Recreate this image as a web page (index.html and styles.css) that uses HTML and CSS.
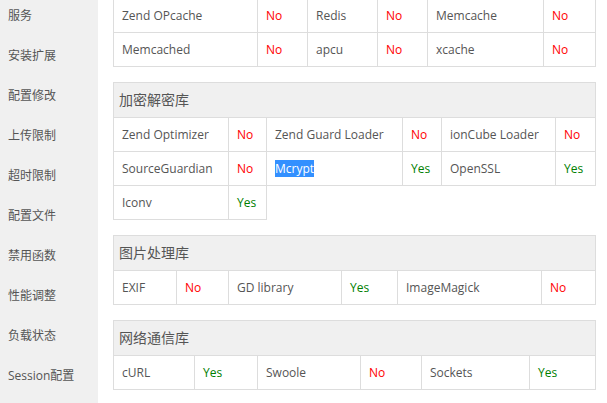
FILE: index.html
```html
<!DOCTYPE html>
<html lang="zh-CN">
<head>
<meta charset="utf-8">
<title>PHP 扩展</title>
<link rel="stylesheet" href="styles.css">
</head>
<body>
<div class="page">
  <aside class="menu">
    <ul class="menu-list">
      <li class="menu-item">服务</li>
      <li class="menu-item">安装扩展</li>
      <li class="menu-item">配置修改</li>
      <li class="menu-item">上传限制</li>
      <li class="menu-item">超时限制</li>
      <li class="menu-item">配置文件</li>
      <li class="menu-item">禁用函数</li>
      <li class="menu-item">性能调整</li>
      <li class="menu-item">负载状态</li>
      <li class="menu-item">Session配置</li>
    </ul>
  </aside>
  <main class="content">
    <table class="lib lib-cache">
      <colgroup><col class="c1"><col class="c2"><col class="c3"><col class="c4"><col class="c5"><col class="c6"></colgroup>
      <tbody>
        <tr><td>Zend OPcache</td><td class="no">No</td><td>Redis</td><td class="no">No</td><td>Memcache</td><td class="no">No</td></tr>
        <tr><td>Memcached</td><td class="no">No</td><td>apcu</td><td class="no">No</td><td>xcache</td><td class="no">No</td></tr>
      </tbody>
    </table>

    <table class="lib lib-crypt">
      <colgroup><col class="c1"><col class="c2"><col class="c3"><col class="c4"><col class="c5"><col class="c6"></colgroup>
      <thead><tr><th colspan="6">加密解密库</th></tr></thead>
      <tbody>
        <tr><td>Zend Optimizer</td><td class="no">No</td><td>Zend Guard Loader</td><td class="no">No</td><td>ionCube Loader</td><td class="no">No</td></tr>
        <tr><td>SourceGuardian</td><td class="no">No</td><td><span class="sel">Mcrypt</span></td><td class="yes">Yes</td><td>OpenSSL</td><td class="yes">Yes</td></tr>
        <tr><td>Iconv</td><td class="yes">Yes</td></tr>
      </tbody>
    </table>

    <table class="lib lib-image">
      <colgroup><col class="c1"><col class="c2"><col class="c3"><col class="c4"><col class="c5"><col class="c6"></colgroup>
      <thead><tr><th colspan="6">图片处理库</th></tr></thead>
      <tbody>
        <tr><td>EXIF</td><td class="no">No</td><td>GD library</td><td class="yes">Yes</td><td>ImageMagick</td><td class="no">No</td></tr>
      </tbody>
    </table>

    <table class="lib lib-net">
      <colgroup><col class="c1"><col class="c2"><col class="c3"><col class="c4"><col class="c5"><col class="c6"></colgroup>
      <thead><tr><th colspan="6">网络通信库</th></tr></thead>
      <tbody>
        <tr><td>cURL</td><td class="yes">Yes</td><td>Swoole</td><td class="no">No</td><td>Sockets</td><td class="yes">Yes</td></tr>
      </tbody>
    </table>
  </main>
</div>
</body>
</html>
```

FILE: styles.css
```css
html, body {
  margin: 0;
  padding: 0;
  background: #fff;
}

body {
  font-family: "Open Sans", "Noto Sans CJK SC", sans-serif;
  font-size: 12px;
  color: #555;
  overflow: hidden;
}

.page {
  display: flex;
  height: 403px;
}

.menu {
  width: 98px;
  flex: 0 0 98px;
  background: #f0f0f0;
  overflow: hidden;
}

.menu-list {
  list-style: none;
  margin: -4px 0 0;
  padding: 0;
}

.menu-item {
  height: 40px;
  line-height: 40px;
  padding-left: 8px;
  font-size: 12px;
  color: #555;
  white-space: nowrap;
}

.content {
  flex: 1;
  padding: 0 11px 0 15px;
  display: flex;
  flex-direction: column;
  gap: 15px;
  overflow: hidden;
}

.lib {
  width: 483px;
  table-layout: fixed;
  border-collapse: separate;
  border-spacing: 0;
  border-top: 1px solid #ddd;
  border-left: 1px solid #ddd;
  font-size: 12px;
  color: #555;
}

.lib-cache {
  margin-top: -2px;
}

.lib td,
.lib th {
  box-sizing: border-box;
  border-right: 1px solid #ddd;
  border-bottom: 1px solid #ddd;
  text-align: left;
  white-space: nowrap;
  overflow: hidden;
}

.lib td {
  padding: 8px 8px;
  line-height: 17px;
}

.lib th {
  padding: 8px 5px;
  line-height: 18px;
  font-size: 14px;
  font-weight: normal;
  background: #f0f0f0;
  color: #555;
}

.no { color: #ff0000; }
.yes { color: #008000; }

.sel {
  background: #3390ff;
  color: #fff;
}

.lib-cache .c1 { width: 144px; }
.lib-cache .c2 { width: 50px; }
.lib-cache .c3 { width: 70px; }
.lib-cache .c4 { width: 50px; }
.lib-cache .c5 { width: 116px; }
.lib-cache .c6 { width: 52px; }

.lib-crypt .c1 { width: 115px; }
.lib-crypt .c2 { width: 38px; }
.lib-crypt .c3 { width: 136px; }
.lib-crypt .c4 { width: 39px; }
.lib-crypt .c5 { width: 114px; }
.lib-crypt .c6 { width: 40px; }

.lib-image .c1 { width: 63px; }
.lib-image .c2 { width: 52px; }
.lib-image .c3 { width: 113px; }
.lib-image .c4 { width: 56px; }
.lib-image .c5 { width: 144px; }
.lib-image .c6 { width: 54px; }

.lib-net .c1 { width: 81px; }
.lib-net .c2 { width: 63px; }
.lib-net .c3 { width: 103px; }
.lib-net .c4 { width: 61px; }
.lib-net .c5 { width: 108px; }
.lib-net .c6 { width: 66px; }
```
